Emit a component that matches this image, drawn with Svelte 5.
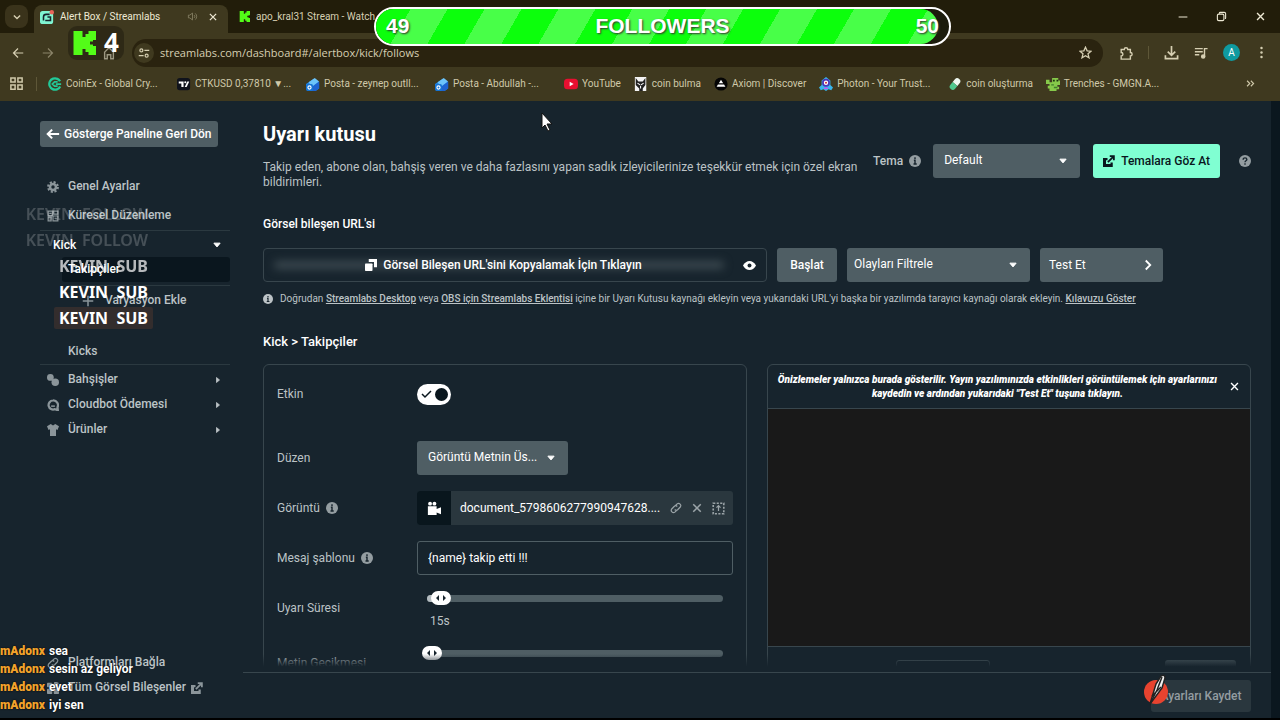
<script>
  const bookmarks = [
    { icon: 'coinex', label: 'CoinEx - Global Cry...', long: true },
    { icon: 'tv', label: 'CTKUSD 0,37810 ▼...', long: true },
    { icon: 'mail', label: 'Posta - zeynep outll...', long: true },
    { icon: 'mail', label: 'Posta - Abdullah -...', long: true },
    { icon: 'youtube', label: 'YouTube' },
    { icon: 'wolf', label: 'coin bulma' },
    { icon: 'axiom', label: 'Axiom | Discover' },
    { icon: 'photon', label: 'Photon - Your Trust...', long: true },
    { icon: 'pill', label: 'coin oluşturma' },
    { icon: 'frog', label: 'Trenches - GMGN.A...' }
  ];

  const chat = [
    { user: 'mAdonx', text: 'sea' },
    { user: 'mAdonx', text: 'sesin az geliyor' },
    { user: 'mAdonx', text: 'evet' },
    { user: 'mAdonx', text: 'iyi sen' }
  ];

  const events = [
    { text: 'KEVIN  FOLLOW', kind: 'follow' },
    { text: 'KEVIN  FOLLOW', kind: 'follow' },
    { text: 'KEVIN  SUB', kind: 'sub fading' },
    { text: 'KEVIN  SUB', kind: 'sub' },
    { text: 'KEVIN  SUB', kind: 'sub latest' }
  ];

  let url = $state('streamlabs.com/dashboard#/alertbox/kick/follows');
  let enabled = $state(true);
  let message = $state('{name} takip etti !!!');
  let duration = $state(3);
  let textDelay = $state(0);
</script>

{#snippet icon(name, size = 12)}
  <svg width={size} height={size} viewBox="0 0 16 16" fill="none" stroke="currentColor" stroke-width="1.6" aria-hidden="true">
    {#if name === 'back'}
      <path d="M15 8H2M8 2L2 8l6 6" />
    {:else if name === 'forward'}
      <path d="M1 8h13M8 2l6 6-6 6" />
    {:else if name === 'arrow-left'}
      <path d="M15 8H2M7 3L2 8l5 5" stroke-width="2.4" />
    {:else if name === 'down'}
      <path d="M3 5.500l5 5 5-5" stroke-width="2.200" />
    {:else if name === 'right'}
      <path d="M5 2l6 6-6 6" stroke-width="2.4" />
    {:else if name === 'close'}
      <path d="M3 3l10 10M13 3L3 13" stroke-width="2" />
    {:else if name === 'caret-down'}
      <path d="M3 5h10l-5 6z" fill="currentColor" stroke-linejoin="round" />
    {:else if name === 'caret-right'}
      <path d="M5 3v10l6-5z" fill="currentColor" stroke-linejoin="round" />
    {:else if name === 'minimize'}
      <path d="M1 8h14" />
    {:else if name === 'restore'}
      <rect x="2" y="4.500" width="9.500" height="9.500" rx="2" /><path d="M5 4V3a1 1 0 0 1 1-1h6a2 2 0 0 1 2 2v6a1 1 0 0 1-1 1" />
    {:else if name === 'sound'}
      <path d="M2 6h2l4-3v10l-4-3H2zM10.500 6a3 3 0 0 1 0 4M12 3.500a6 6 0 0 1 0 9" stroke-width="1.200" />
    {:else if name === 'star'}
      <path d="M8 1.500l2 4.500 4.800.4-3.700 3.200 1.200 4.900L8 11.900l-4.300 2.600 1.200-4.900L1.200 6.400 6 6z" />
    {:else if name === 'puzzle'}
      <path d="M2.500 4H6a2 2 0 0 1 4 0h3v3.500a2 2 0 0 1 0 4V15H2.500v-3.500a2 2 0 0 0 0-4z" />
    {:else if name === 'download'}
      <path d="M8 1v9M4 7l4 4 4-4M1.500 11v3.500h13V11" stroke-width="1.800" />
    {:else if name === 'playlist'}
      <path d="M1 3h9M1 6.500h9M1 10h5M12 12V3h3.500" /><circle cx="10.500" cy="12" r="1.800" fill="currentColor" />
    {:else if name === 'dots'}
      <g fill="currentColor" stroke="none"><circle cx="8" cy="2.500" r="1.500" /><circle cx="8" cy="8" r="1.500" /><circle cx="8" cy="13.500" r="1.500" /></g>
    {:else if name === 'tune'}
      <circle cx="4.500" cy="4.500" r="2" /><circle cx="11.500" cy="11.500" r="2" /><path d="M8.500 4.500H15M1 11.500h6.500" />
    {:else if name === 'apps'}
      <path d="M2 2h4.500v4.500H2zM9.500 2H14v4.500H9.500zM2 9.500h4.500V14H2zM9.500 9.500H14V14H9.500z" />
    {:else if name === 'home'}
      <path d="M3 7l5-5 5 5v7.500h-3V10H6v4.500H3z" />
    {:else if name === 'chevrons'}
      <path d="M3 4l4 4-4 4M8.500 4l4 4-4 4" />
    {:else if name === 'gear'}
      <circle cx="8" cy="8" r="4" stroke-width="3.400" /><circle cx="8" cy="8" r="6.500" stroke-width="2.800" stroke-dasharray="2.800 2.300" />
    {:else if name === 'grid'}
      <path d="M1.500 1.500h6v6h-6zM9 1.500h5.500v4H9zM1.500 9.500h4v5h-4zM8 8h6.500v6.500H8z" /><path d="M3 4.500h3M10 11h3" />
    {:else if name === 'coins'}
      <g fill="currentColor" stroke="none"><circle cx="4.500" cy="4.500" r="4.500" /><circle cx="11" cy="11" r="5" /></g>
    {:else if name === 'cloudbot'}
      <path d="M8 2a6 6 0 1 0 2.500 11.500l4 1.500-.5-4A6.200 6.200 0 0 0 8 2z" stroke-width="3" /><path d="M5.500 9.500h5" stroke-width="2" />
    {:else if name === 'shirt'}
      <path d="M5 0l3 2 3-2 5 3-2 5-2-1v9H4V7L2 8 0 3z" fill="currentColor" stroke="none" />
    {:else if name === 'plus'}
      <path d="M8 1v14M1 8h14" stroke-width="2" />
    {:else if name === 'link'}
      <path d="M7 5l2.500-2.500a3 3 0 0 1 4.200 4.200L10.500 10a3 3 0 0 1-4.200 0M9 11l-2.500 2.500a3 3 0 0 1-4.200-4.200L5.500 6a3 3 0 0 1 4.200 0" />
    {:else if name === 'widgets'}
      <g fill="currentColor" stroke="none"><rect x="0" y="1" width="7" height="6" rx="1" /><rect x="9" y="0" width="6" height="6" rx="1" transform="rotate(15 12 3)" /><rect x="0" y="9" width="7" height="7" rx="1" /><rect x="9" y="9" width="7" height="7" rx="1" /></g>
    {:else if name === 'external'}
      <path d="M0 4h6v3H4v5h6v-2h3v6H0z" fill="currentColor" stroke="none" /><path d="M6.500 9.500l7-7M9 1.500h5.500V7" stroke-width="2.400" />
    {:else if name === 'copy'}
      <path d="M5 0h11v11h-4V4H5z" fill="currentColor" stroke="none" /><rect x="0" y="6" width="10" height="10" rx="1" fill="currentColor" stroke="none" />
    {:else if name === 'eye'}
      <path d="M0 8c4-7.500 12-7.500 16 0-4 7.500-12 7.500-16 0z" fill="currentColor" stroke="none" /><circle cx="8" cy="8" r="2.400" fill="#17242d" stroke="none" />
    {:else if name === 'info'}
      <circle cx="8" cy="8" r="8" fill="currentColor" stroke="none" /><path d="M8 3v2.200M6.500 7H8v5M6 12h4.300" stroke="#17242d" stroke-width="1.900" />
    {:else if name === 'help'}
      <circle cx="8" cy="8" r="8" fill="currentColor" stroke="none" /><path d="M5.500 6.200c0-3.200 5-3 5-.2 0 1.800-2.500 1.600-2.500 3.500M8 11v2" stroke="#17242d" stroke-width="1.800" />
    {:else if name === 'camera'}
      <path d="M1 6h10v3l5-2v8l-5-2v3H1z" fill="currentColor" stroke="none" /><circle cx="3.500" cy="3" r="2.200" fill="currentColor" stroke="none" /><circle cx="8.500" cy="3" r="2.200" fill="currentColor" stroke="none" />
    {:else if name === 'crop'}
      <rect x="1.500" y="1.500" width="13" height="13" stroke-dasharray="2.600 1.700" stroke-width="2" /><path d="M8 5v6M5.500 7L8 4.500 10.500 7" stroke-width="1.500" />
    {:else if name === 'streamlabs'}
      <rect x="0" y="1" width="15" height="15" rx="3" fill="#80f5d2" stroke="none" /><path d="M4 12V8a3 3 0 0 1 3-3h4M6 12h6V8H8.500" stroke="#17242d" stroke-width="1.800" /><circle cx="13.500" cy="2.500" r="2.500" fill="#e8645a" stroke="none" />
    {:else if name === 'kick'}
      <path d="M1 0h6v4h2V2h2V0h5v6h-2v1h-2v2h2v1h2v6h-5v-2H9v-2H7v4H1z" fill="#53fc18" stroke="none" />
    {:else if name === 'coinex'}
      <circle cx="8" cy="8" r="6.500" stroke="#22c998" stroke-width="2.600" stroke-dasharray="34 7" transform="rotate(25 8 8)" /><path d="M11 5.500H7.500L5 8l2.500 2.500H11M9 8h6" stroke="#22c998" stroke-width="2" />
    {:else if name === 'tv'}
      <rect y="1" width="15" height="14" rx="3" fill="#10131c" stroke="none" /><path d="M2 5h5.500v6.500H5v-4H2z" fill="#fff" stroke="none" /><circle cx="9.500" cy="6" r="1.200" fill="#fff" stroke="none" /><path d="M14 5l-3 6.500H8.800l3-6.500z" fill="#fff" stroke="none" />
    {:else if name === 'mail'}
      <path d="M0 8l9-6 6 4v7l-4 3H2l-2-2z" fill="#2387e6" stroke="none" /><path d="M3 6l7-5 5 4-8 6z" fill="#6cc4fa" stroke="none" /><path d="M7 11l8-6v8l-4 3H7z" fill="#1e63d0" stroke="none" /><rect y="8" width="8" height="8" rx="2" fill="#1574d4" stroke="none" /><circle cx="4" cy="12" r="1.800" stroke="#fff" stroke-width="1.300" />
    {:else if name === 'youtube'}
      <rect y="2" width="16" height="12" rx="4" fill="#e80f30" stroke="none" /><path d="M6.500 5.500v5L11 8z" fill="#fff" stroke="none" />
    {:else if name === 'wolf'}
      <rect x="1" width="13" height="16" fill="#f3f3f3" stroke="none" /><path d="M2 1l3 4h5l3-4v8l-3 4v3H6v-3L2 9z" fill="#222" stroke="none" /><path d="M4 7l3 2M11 7L8 9M7.500 10v3" stroke="#fff" stroke-width="1.200" />
    {:else if name === 'axiom'}
      <circle cx="8" cy="8" r="7.500" fill="#050505" stroke="none" /><path d="M8 3l2.500 4h-5zM4.500 8.500h7L13 11H3z" fill="#fff" stroke="none" />
    {:else if name === 'photon'}
      <path d="M8 0l5 4v5l3 3-2 3-3-1-3 2-3-2-3 1-2-3 3-3V4z" fill="#39b6ed" stroke="none" /><circle cx="8" cy="6.500" r="3.500" fill="#fff" stroke="#4936b8" stroke-width="2" /><circle cx="8" cy="6.500" r="1.200" fill="#d9303e" stroke="none" /><path d="M6 13h4" stroke="#d946ef" />
    {:else if name === 'pill'}
      <g transform="rotate(40 8 8)" stroke="none"><path d="M4.500 8V4a3.500 3.500 0 0 1 7 0v4z" fill="#eef8f0" /><path d="M4.500 8v4a3.500 3.500 0 0 0 7 0V8z" fill="#4fc88d" /></g>
    {:else if name === 'frog'}
      <path d="M0 3h4v3h3V1h7v3h2v5h-3v2h2v3h-3v2H4v-3H2v-3h2V8H0z" fill="#86c94a" stroke="none" /><path d="M8 3h2v2H8zM12 3h2v2h-2z" fill="#1c3510" stroke="none" /><path d="M9 12h4M6 9h3" stroke="#3f7e2c" />
    {/if}
  </svg>
{/snippet}

<div class="screen">
  <header class="browser">
    <div class="tabs">
      <button class="tab-search" aria-label="Sekmelerde ara">{@render icon('down', 10)}</button>
      <div class="tab active">
        {@render icon('streamlabs', 14)}
        <span class="tab-title">Alert Box / Streamlabs</span>
        <span class="sound">{@render icon('sound', 11)}</span>
        <button aria-label="Sekmeyi kapat">{@render icon('close', 10)}</button>
      </div>
      <div class="tab">
        {@render icon('kick', 11)}
        <span class="tab-title">apo_kral31 Stream - Watch</span>
      </div>
      <div class="window-buttons">
        <button aria-label="Simge durumuna küçült">{@render icon('minimize', 10)}</button>
        <button aria-label="Geri yükle">{@render icon('restore', 11)}</button>
        <button aria-label="Kapat">{@render icon('close', 11)}</button>
      </div>
    </div>
    <div class="toolbar">
      <button aria-label="Geri">{@render icon('back')}</button>
      <button class="dim" aria-label="İleri">{@render icon('forward')}</button>
      <button class="home" aria-label="Ana sayfa">{@render icon('home', 14)}</button>
      <div class="omnibox">
        <span class="tune">{@render icon('tune')}</span>
        <input aria-label="Adres" bind:value={url} />
        <button aria-label="Yer işareti">{@render icon('star', 13)}</button>
      </div>
      <div class="tools">
        <button aria-label="Uzantılar">{@render icon('puzzle', 14)}</button>
        <span class="divider"></span>
        <button aria-label="İndirilenler">{@render icon('download', 15)}</button>
        <button aria-label="Medya">{@render icon('playlist', 14)}</button>
        <button class="avatar">A</button>
        <button aria-label="Menü">{@render icon('dots', 13)}</button>
      </div>
    </div>
    <nav class="bookmarks" aria-label="Yer işaretleri">
      <button class="apps" aria-label="Uygulamalar">{@render icon('apps', 15)}</button>
      {#each bookmarks as mark}
        <a href="#bookmark" class:long={mark.long}>{@render icon(mark.icon, 14)}{mark.label}</a>
      {/each}
      <button class="more" aria-label="Diğer">{@render icon('chevrons', 11)}</button>
    </nav>
  </header>

  <div class="page">
    <aside>
      <button class="back">{@render icon('arrow-left', 14)}Gösterge Paneline Geri Dön</button>
      <nav class="menu">
        <a href="#general" class="tall">{@render icon('gear')}Genel Ayarlar</a>
        <a href="#global" class="tall">{@render icon('grid')}Küresel Düzenleme</a>
        <hr />
        <a href="#kick" class="group">Kick<span class="caret">{@render icon('caret-down', 10)}</span></a>
        <a href="#follows" class="current">Takipçiler</a>
        <hr class="indent" />
        <a href="#variation" class="variation">{@render icon('plus')}Varyasyon Ekle</a>
        <a href="#kicks" class="kicks">Kicks</a>
        <hr />
        <a href="#tips">{@render icon('coins')}Bahşişler<span class="caret">{@render icon('caret-right', 8)}</span></a>
        <a href="#cloudbot">{@render icon('cloudbot')}Cloudbot Ödemesi<span class="caret">{@render icon('caret-right', 8)}</span></a>
        <a href="#merch">{@render icon('shirt')}Ürünler<span class="caret">{@render icon('caret-right', 8)}</span></a>
      </nav>
      <nav class="menu bottom">
        <a href="#platforms">{@render icon('link')}Platformları Bağla</a>
        <a href="#widgets">{@render icon('widgets')}Tüm Görsel Bileşenler<span class="out">{@render icon('external')}</span></a>
      </nav>
    </aside>

    <main>
      <div class="scroll">
        <div class="intro">
          <div class="intro-text">
            <h1>Uyarı kutusu</h1>
            <p>Takip eden, abone olan, bahşiş veren ve daha fazlasını yapan sadık izleyicilerinize teşekkür etmek için özel ekran bildirimleri.</p>
          </div>
          <div class="theme">
            <label for="theme">Tema</label>
            <span class="muted">{@render icon('info')}</span>
            <div class="select theme-select">
              <select id="theme"><option>Default</option></select>
              {@render icon('caret-down', 10)}
            </div>
            <button class="primary">{@render icon('external')}Temalara Göz At</button>
            <span class="muted">{@render icon('help')}</span>
          </div>
        </div>

        <h2>Görsel bileşen URL'si</h2>
        <div class="url-row">
          <div class="url-box">
            <span class="secret" aria-hidden="true"></span>
            <button class="copy">{@render icon('copy')}Görsel Bileşen URL'sini Kopyalamak İçin Tıklayın</button>
            <button class="eye" aria-label="Göster">{@render icon('eye', 13)}</button>
          </div>
          <button class="solid start">Başlat</button>
          <div class="select filter">
            <select aria-label="Olayları Filtrele"><option>Olayları Filtrele</option></select>
            {@render icon('caret-down', 10)}
          </div>
          <button class="solid test">Test Et{@render icon('right')}</button>
        </div>
        <p class="hint">
          {@render icon('info', 10)}
          <span>Doğrudan <a href="#desktop">Streamlabs Desktop</a> veya <a href="#obs">OBS için Streamlabs Eklentisi</a> içine bir Uyarı Kutusu kaynağı ekleyin veya yukarıdaki URL'yi başka bir yazılımda tarayıcı kaynağı olarak ekleyin. <a href="#guide">Kılavuzu Göster</a></span>
        </p>

        <h2 class="crumbs">Kick &gt; Takipçiler</h2>
        <div class="panels">
          <section class="settings">
            <div class="row enabled">
              <label for="enabled">Etkin</label>
              <input id="enabled" class="toggle" type="checkbox" bind:checked={enabled} />
            </div>
            <div class="row">
              <label for="layout">Düzen</label>
              <div class="select layout">
                <select id="layout"><option>Görüntü Metnin Üs...</option></select>
                {@render icon('caret-down', 10)}
              </div>
            </div>
            <div class="row">
              <span class="label">Görüntü<span class="muted">{@render icon('info')}</span></span>
              <div class="file">
                <span class="thumb">{@render icon('camera', 14)}</span>
                <span class="name">document_5798606277990947628....</span>
                <button aria-label="Bağlantı">{@render icon('link')}</button>
                <button aria-label="Kaldır">{@render icon('close')}</button>
                <button aria-label="Değiştir">{@render icon('crop', 13)}</button>
              </div>
            </div>
            <div class="row">
              <label for="message">Mesaj şablonu<span class="muted">{@render icon('info')}</span></label>
              <input id="message" class="text" bind:value={message} />
            </div>
            <div class="row slide">
              <label for="duration">Uyarı Süresi</label>
              <div class="slider">
                <span class="fill" style="width: {duration}%"></span>
                <input id="duration" type="range" bind:value={duration} />
                <output for="duration">15s</output>
              </div>
            </div>
            <div class="row slide">
              <label for="delay">Metin Gecikmesi</label>
              <div class="slider">
                <input id="delay" type="range" bind:value={textDelay} />
              </div>
            </div>
          </section>

          <section class="preview">
            <div class="notice">
              <p>Önizlemeler yalnızca burada gösterilir. Yayın yazılımınızda etkinlikleri görüntülemek için ayarlarınızı kaydedin ve ardından yukarıdaki "Test Et" tuşuna tıklayın.</p>
              <button aria-label="Kapat">{@render icon('close', 11)}</button>
            </div>
            <div class="stage"></div>
            <div class="controls">
              <input aria-label="Arka plan" />
              <button class="solid" aria-label="Oynat"></button>
            </div>
          </section>
        </div>
      </div>
      <footer>
        <button disabled>Ayarları Kaydet</button>
      </footer>
    </main>
    <div class="scrollbar"></div>
  </div>

  <!-- stream overlays -->
  <div class="goal">
    <div class="goal-fill"></div>
    <span>49</span>
    <span>FOLLOWERS</span>
    <span>50</span>
  </div>
  <div class="viewers">{@render icon('kick', 24)}<span>4</span></div>
  <div class="events">
    {#each events as event}
      <div><span class={event.kind}>{event.text}</span></div>
    {/each}
  </div>
  <div class="chat">
    {#each chat as line}
      <div><b>{line.user}</b>{line.text}</div>
    {/each}
  </div>
  <svg class="cursor" width="12" height="20" viewBox="0 0 12 20" aria-hidden="true">
    <path d="M1 1v15l3-3 3 6 2-1-3-6h5z" fill="#fff" stroke="#111" stroke-width="1" />
  </svg>
  <svg class="pen" width="28" height="32" viewBox="0 0 28 32" aria-hidden="true">
    <circle cx="13" cy="18" r="12" fill="#e8432f" />
    <path d="M7 30L13 10 18 2q4-2 4 2l-3 10z" fill="#f2f2f2" stroke="#222" stroke-width="1.500" />
    <path d="M7 30l7-14 5-13M9 22l9-9" fill="none" stroke="#222" stroke-width="1.500" />
  </svg>
</div>

<style>
  :global(body) {
    margin: 0;
    background: #000;
  }

  .screen {
    position: relative;
    display: flex;
    flex-direction: column;
    height: 100vh;
    overflow: hidden;
    box-sizing: border-box;
    padding-bottom: 2px;
    background: #000;
    color: #bcc3c6;
    font: 12px/15px Roboto, sans-serif;
  }

  .screen :global(*) {
    box-sizing: border-box;
  }

  svg {
    display: block;
    flex: none;
  }

  button,
  input,
  select {
    margin: 0;
    padding: 0;
    border: 0;
    background: none;
    color: inherit;
    font: inherit;
  }

  button {
    display: flex;
    align-items: center;
    justify-content: center;
  }

  a {
    color: inherit;
  }

  /* browser */
  .browser {
    flex: none;
    background: #3f391f;
    color: #d6cfb2;
    font: 10px/16px Roboto, sans-serif;
  }

  .tabs {
    display: flex;
    height: 33px;
    padding-left: 5px;
    background: #221d0a;
  }

  .tab-search {
    width: 23px;
    height: 23px;
    margin: 5px 6px 0 0;
    border-radius: 8px;
    background: #3a331b;
  }

  .tab {
    display: flex;
    align-items: center;
    gap: 6px;
    width: 194px;
    padding: 0 10px 0 11px;
    white-space: nowrap;
  }

  .tab.active {
    margin-top: 5px;
    padding: 0 10px 5px 6px;
    border-radius: 8px 8px 0 0;
    background: #3f391f;
    color: #eee9d4;
  }

  .tab-title {
    flex: 1;
  }

  .sound {
    margin-right: 4px;
    color: #8a8468;
  }

  .window-buttons {
    display: flex;
    gap: 28px;
    margin-left: auto;
    padding-right: 14px;
    color: #eee9d4;
  }

  .toolbar {
    display: flex;
    align-items: center;
    height: 38px;
    padding: 1px 12px 0;
  }

  .toolbar > button {
    width: 12px;
    margin-right: 18px;
  }

  .toolbar > .home {
    width: 14px;
    margin: 0 16px 0 30px;
  }

  .dim {
    opacity: 0.5;
  }

  .omnibox {
    display: flex;
    flex: 1;
    align-items: center;
    gap: 6px;
    height: 28px;
    padding: 0 11px 0 2px;
    border-radius: 14px;
    background: #2a230f;
  }

  .tune {
    display: flex;
    align-items: center;
    justify-content: center;
    width: 20px;
    height: 20px;
    border-radius: 10px;
    background: #3f391f;
  }

  .omnibox input {
    flex: 1;
    font: 11px/16px "Open Sans", sans-serif;
  }

  .tools {
    display: flex;
    align-items: center;
    gap: 15px;
    padding-left: 16px;
  }

  .divider {
    width: 1px;
    height: 13px;
    background: #5e5738;
  }

  .avatar {
    width: 17px;
    height: 17px;
    border-radius: 50%;
    background: #0f9aa0;
    color: #fff;
  }

  .bookmarks {
    display: flex;
    align-items: center;
    height: 30px;
    padding: 0 24px 5px 9px;
    color: #d0c9aa;
  }

  .bookmarks a {
    display: flex;
    flex: none;
    align-items: center;
    gap: 4px;
    padding-right: 13px;
    text-decoration: none;
    white-space: nowrap;
  }

  .bookmarks a.long {
    width: 129px;
    padding-right: 0;
  }

  .apps {
    width: 28px;
    height: 14px;
    margin-right: 11px;
    padding-right: 13px;
    border-right: 1px solid #5e5738;
  }

  .more {
    margin-left: auto;
  }

  /* dashboard */
  .page {
    display: flex;
    flex: 1;
    min-height: 0;
    background: #17242d;
  }

  .scrollbar {
    width: 9px;
    background: #0b171f;
  }

  aside {
    display: flex;
    flex: none;
    flex-direction: column;
    width: 243px;
    padding: 20px 13px 18px 40px;
  }

  .back {
    align-self: flex-start;
    gap: 4px;
    height: 26px;
    padding: 0 6px;
    border-radius: 3px;
    background: #4f5e64;
    color: #fff;
    font-weight: 500;
  }

  .menu {
    display: flex;
    flex-direction: column;
    margin-top: 25px;
    font-weight: 500;
  }

  .menu a {
    display: flex;
    align-items: center;
    gap: 9px;
    height: 25px;
    padding: 0 8px 0 7px;
    text-decoration: none;
  }

  .menu a > :global(svg) {
    color: #8b959a;
  }

  .menu .tall {
    height: 29px;
  }

  .menu hr {
    width: 100%;
    height: 1px;
    margin: 0 0 2px;
    border: 0;
    background: #2b3940;
  }

  .menu .group {
    height: 24px;
    padding-left: 13px;
    color: #fff;
  }

  .caret {
    margin-left: auto;
  }

  .out {
    margin-left: -4px;
    color: #8b959a;
  }

  .menu .current {
    margin-left: 22px;
    padding-left: 6px;
    border-radius: 3px;
    background: #0a161e;
    color: #fff;
  }

  .menu .indent {
    width: auto;
    margin: 3px 0 2px 28px;
  }

  .menu .variation {
    gap: 11px;
    padding-left: 42px;
  }

  .menu .kicks {
    height: 26px;
    margin-top: 25px;
    padding-left: 28px;
  }

  .bottom {
    margin-top: auto;
  }

  main {
    display: flex;
    flex: 1;
    flex-direction: column;
    min-width: 0;
  }

  .scroll {
    position: relative;
    flex: 1;
    min-height: 0;
    overflow: hidden;
    padding: 20px 20px 0;
  }

  .scroll::after {
    content: "";
    position: absolute;
    inset: auto 0 0;
    height: 18px;
    background: linear-gradient(transparent, #17242d 70%);
  }

  .intro {
    display: flex;
    gap: 10px;
  }

  .intro-text {
    flex: 1;
  }

  h1 {
    margin: 0 0 13px;
    color: #fff;
    font: 700 20px/26px Roboto, sans-serif;
  }

  p {
    margin: 0;
  }

  .theme {
    display: flex;
    align-items: center;
    height: 34px;
    margin-top: 23px;
  }

  .theme > .muted:last-child {
    margin-left: 19px;
  }

  .theme label {
    margin-right: 6px;
    font-weight: 500;
  }

  .muted {
    color: #949da1;
  }

  .select {
    position: relative;
    display: flex;
    align-items: center;
    height: 34px;
    border-radius: 3px;
    background: #4f5e64;
    color: #fff;
  }

  .select select {
    width: 100%;
    height: 100%;
    padding: 0 26px 2px 11px;
    appearance: none;
    outline: 0;
  }

  .select > :global(svg) {
    position: absolute;
    right: 12px;
    pointer-events: none;
  }

  .theme-select {
    width: 147px;
    margin: 0 13px 0 12px;
  }

  .primary {
    gap: 6px;
    height: 34px;
    padding: 0 10px;
    border-radius: 3px;
    background: #80ffd2;
    color: #09161d;
    font-weight: 500;
  }

  h2 {
    margin: 27px 0 16px;
    color: #fff;
    font: 500 12px/15px Roboto, sans-serif;
  }

  .url-row {
    display: flex;
    gap: 10px;
    padding-right: 88px;
  }

  .url-box {
    position: relative;
    display: flex;
    flex: 1;
    align-items: center;
    height: 34px;
    padding: 0 10px;
    border: 1px solid #38464d;
    border-radius: 4px;
    color: #fff;
  }

  /* hidden address behind the copy button */
  .secret {
    position: absolute;
    left: 10px;
    right: 42px;
    height: 8px;
    border-radius: 4px;
    background: #3c4950;
    filter: blur(4px);
  }

  .copy {
    position: relative;
    flex: 1;
    gap: 6px;
    padding-right: 10px;
    font-weight: 500;
  }

  .solid {
    height: 34px;
    border-radius: 3px;
    background: #4f5e64;
    color: #fff;
    font-weight: 500;
  }

  .start {
    width: 60px;
  }

  .filter {
    width: 183px;
  }

  .filter select {
    padding-left: 7px;
  }

  .test {
    justify-content: space-between;
    width: 123px;
    padding: 0 9px;
    font-weight: 400;
  }

  .hint {
    display: flex;
    align-items: center;
    gap: 7px;
    margin-top: 9px;
    font-size: 10px;
  }

  .hint a {
    font-weight: 500;
  }

  .crumbs {
    margin: 28px 0 15px;
    font-size: 13px;
  }

  .panels {
    display: grid;
    grid-template-columns: 1fr 1fr;
    gap: 20px;
  }

  .settings,
  .preview {
    min-width: 0;
    border: 1px solid #38464d;
    border-radius: 6px 6px 0 0;
  }

  .settings {
    padding: 12px 13px;
  }

  .row {
    display: grid;
    grid-template-columns: 140px minmax(0, 1fr);
    align-items: center;
    height: 34px;
    margin-bottom: 16px;
  }

  .row.enabled {
    margin-bottom: 30px;
  }

  .row label,
  .label {
    display: flex;
    align-items: center;
    gap: 6px;
  }

  .toggle {
    position: relative;
    width: 34px;
    height: 21px;
    border-radius: 11px;
    background: #4f5e64;
    appearance: none;
  }

  .toggle:checked {
    background: #fff url('data:image/svg+xml,<svg xmlns="http://www.w3.org/2000/svg" width="11" height="9"><path d="M1 4l3 3 6-6" fill="none" stroke="%2309161d" stroke-width="1.500"/></svg>') no-repeat 4px 6px;
  }

  .toggle::after {
    content: "";
    position: absolute;
    top: 4px;
    right: 3px;
    width: 13px;
    height: 13px;
    border-radius: 50%;
    background: #09161d;
  }

  .layout {
    width: 151px;
  }

  .file {
    display: flex;
    align-items: center;
    gap: 9px;
    height: 34px;
    padding-right: 8px;
    border-radius: 3px;
    background: #2a373e;
    color: #9ba4a8;
  }

  .thumb {
    display: flex;
    flex: none;
    align-items: center;
    justify-content: center;
    width: 34px;
    height: 34px;
    border-radius: 3px 0 0 3px;
    background: #09161d;
    color: #fff;
  }

  .name {
    flex: 1;
    color: #fff;
  }

  .text {
    width: 100%;
    height: 34px;
    padding: 0 10px;
    border: 1px solid #4f5e64;
    border-radius: 3px;
    color: #fff;
  }

  .row.slide {
    height: 39px;
  }

  .row.slide label {
    padding-bottom: 5px;
  }

  .slider {
    position: relative;
    display: flex;
    flex-direction: column;
    height: 39px;
    padding: 0 5px;
  }

  .slider::before,
  .fill {
    content: "";
    position: absolute;
    top: 4px;
    left: 10px;
    right: 10px;
    height: 7px;
    border-radius: 4px;
    background: #4f5e64;
  }

  .fill {
    right: auto;
    background: #b4bcc0;
  }

  .slider input {
    position: relative;
    width: 100%;
    height: 14px;
    appearance: none;
  }

  .slider input::-webkit-slider-thumb {
    width: 20px;
    height: 14px;
    border-radius: 7px;
    background: #fff url('data:image/svg+xml,<svg xmlns="http://www.w3.org/2000/svg" width="12" height="6"><path d="M4 0v6L1 3zM8 0v6l3-3z" fill="%2317242d"/></svg>') no-repeat center;
    appearance: none;
  }

  .slider output {
    margin-top: 9px;
    padding-left: 8px;
  }

  .notice {
    display: flex;
    align-items: center;
    height: 43px;
    padding: 0 10px 0 8px;
    color: #fff;
    font: italic 900 10px/14px Roboto, sans-serif;
    text-align: center;
  }

  .notice p {
    flex: 1;
    padding-right: 10px;
  }

  .stage {
    height: 239px;
    border: solid #38464d;
    border-width: 1px 0;
    background: #191919;
  }

  .controls {
    display: flex;
    align-items: center;
    justify-content: space-between;
    padding: 13px 14px 13px 128px;
  }

  .controls input {
    width: 94px;
    height: 34px;
    border: 1px solid #4f5e64;
    border-radius: 3px;
  }

  .controls button {
    width: 71px;
  }

  footer {
    display: flex;
    justify-content: flex-end;
    padding: 7px 20px 6px;
    border-top: 1px solid #38464d;
  }

  footer button {
    width: 100px;
    height: 32px;
    border-radius: 3px;
    background: #2a373e;
    color: #949da1;
    font-weight: 500;
  }

  /* overlays */
  .goal {
    position: absolute;
    top: 7px;
    left: 374px;
    display: flex;
    align-items: center;
    justify-content: space-between;
    width: 577px;
    height: 39px;
    padding: 0 10px;
    overflow: hidden;
    border: 2px solid #fff;
    border-radius: 20px;
    background: #1c1c0c;
    color: #fff;
    font: bold 21px/26px "Liberation Sans", sans-serif;
    text-shadow: 1px 1px 2px #333;
  }

  .goal-fill {
    position: absolute;
    inset: 0 auto 0 0;
    width: 98%;
    border-radius: 0 20px 20px 0;
    background: repeating-linear-gradient(120deg, #0cff0c 0 30px, #48ff48 30px 62px, #0cff0c 62px 64px);
  }

  .goal span {
    position: relative;
    padding-bottom: 2px;
  }

  .viewers {
    position: absolute;
    top: 26px;
    left: 68px;
    display: flex;
    gap: 8px;
    height: 34px;
    padding: 5px 5px 0 4px;
    border-radius: 9px;
    background: #0004;
    color: #fff;
    font: bold 26px/22px "Open Sans", sans-serif;
  }

  .events {
    position: absolute;
    top: 201px;
    left: 19px;
    width: 134px;
    color: #fff;
    font: 600 16px/22px "Noto Sans", sans-serif;
    text-align: right;
    white-space: pre;
  }

  .events div {
    height: 26px;
    padding-top: 2px;
  }

  .events span {
    display: inline-block;
    padding: 0 5px;
  }

  .follow {
    opacity: 0.2;
  }

  .events .sub {
    font-weight: 700;
  }

  .fading {
    opacity: 0.7;
  }

  .events .latest {
    border-radius: 2px;
    background: #332d2d;
  }

  .chat {
    position: absolute;
    bottom: 6px;
    left: 0;
    color: #fff;
    font-weight: 700;
    line-height: 18px;
    text-shadow: 0 0 2px #000;
  }

  .chat b {
    margin-right: 4px;
    color: #f2a32c;
  }

  .cursor {
    position: absolute;
    top: 112px;
    left: 541px;
  }

  .pen {
    position: absolute;
    right: 109px;
    bottom: 14px;
  }
</style>
